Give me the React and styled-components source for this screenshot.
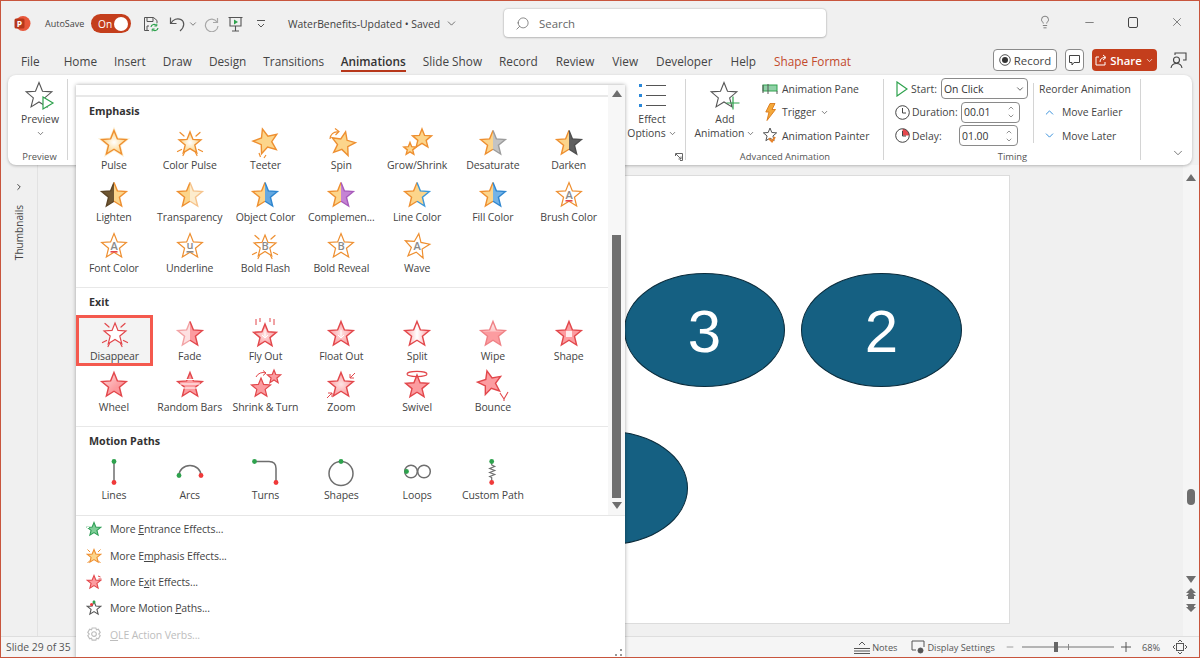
import React from 'react';
import styled, { createGlobalStyle } from 'styled-components';
import { Search, Lightbulb, Minus, X, ChevronDown, ChevronUp, ChevronRight } from 'lucide-react';

const FONT = `"Open Sans", "Noto Sans", Arial, sans-serif`;
const Global = createGlobalStyle`
  html, body { margin: 0; padding: 0; background: #f0f0f0; }
  * { box-sizing: border-box; }
  body { font-family: ${FONT}; color: #444; overflow: hidden; }
`;

const OS = '#ee8f30', OF = '#fcd58b', RS = '#e2474b', RF = '#fc9ca0';

const starArr = (cx, cy, R, r, rot) => {
  const out = [];
  for (let i = 0; i < 10; i++) {
    const a = ((-90 + i * 36 + rot) * Math.PI) / 180;
    const d = i % 2 ? r : R;
    out.push(`${(cx + d * Math.cos(a)).toFixed(2)},${(cy + d * Math.sin(a)).toFixed(2)}`);
  }
  return out;
};

function Star({ cx = 16, cy = 17.5, R = 13, r, rot = 0, fill = OF, stroke = OS, sw = 1.4, lf, rf, ls, rs }) {
  const p = starArr(cx, cy, R, r || R * 0.44, rot);
  if (lf || rf || ls || rs) {
    const right = p.slice(0, 6);
    const left = [...p.slice(5), p[0]];
    return (
      <g strokeLinejoin="miter">
        <polygon points={left.join(' ')} fill={lf || fill} />
        <polygon points={right.join(' ')} fill={rf || fill} />
        <polyline points={left.join(' ')} fill="none" stroke={ls || stroke} strokeWidth={sw} />
        <polyline points={right.join(' ')} fill="none" stroke={rs || stroke} strokeWidth={sw} />
      </g>
    );
  }
  return <polygon points={p.join(' ')} fill={fill} stroke={stroke} strokeWidth={sw} strokeLinejoin="miter" />;
}

const Letter = ({ c, u, color = '#8a8a8a', y = 20.5 }) => (
  <>
    <text x="16" y={y} textAnchor="middle" fontSize="11" fontWeight="600" fontFamily={FONT} fill={color}>{c}</text>
    {u && <line x1="12.5" x2="19.5" y1="22.8" y2="22.8" stroke={u} strokeWidth="1.6" />}
  </>
);

const Rays = ({ color = OS, cy = 17.5 }) => (
  <g stroke={color} strokeWidth="1.2" strokeLinecap="round">
    <path d={`M6 ${cy - 11}l4 3.5M26 ${cy - 11}l-4 3.5M3.5 ${cy + 8}l4 -2M28.5 ${cy + 8}l-4 -2M9 ${cy + 12}l1.5 -3M23 ${cy + 12}l-1.5 -3`} />
  </g>
);

const MotionStroke = styled.g`
  fill: none;
  stroke: #6e6e6e;
  stroke-width: ${p => p.$sw || 1.5};
`;
const Dots = ({ g, r }) => (
  <>
    <circle cx={g[0]} cy={g[1]} r="2.4" fill="#2ea24d" />
    {r && <circle cx={r[0]} cy={r[1]} r="2.4" fill="#f03a3a" />}
  </>
);

const ICONS = {
  pulse: <><Star R={17} sw={0} fill="#fdf0d4" stroke="none" /><Star fill="url(#oGlow)" /></>,
  colorPulse: <><Rays /><Star R={11.5} fill="url(#oGlow)" /></>,
  teeter: <><Star rot={-16} cx={17} cy={15.5} /><path d="M10 27l1.5 4M15 32l2-3" stroke={OS} strokeWidth="1.2" fill="none" /></>,
  spin: <><Star rot={12} cx={18} cy={18} R={12.5} /><path d="M5 13a7 7 0 0 1 8-7M10 2.5l4 3-3.5 3.5" stroke={OS} strokeWidth="1.2" fill="none" /></>,
  grow: <><Star cx={21} cy={13} R={10} /><Star cx={9} cy={23} R={6.5} /></>,
  desaturate: <Star rf="#c4c4c4" rs="#9c9c9c" />,
  darken: <Star rf="#5f5f5f" rs="#4f4f4f" />,
  lighten: <Star lf="#6f5733" ls="#5c4526" />,
  transparency: <Star rf="#fdeccd" rs="#f6c48d" />,
  objectColor: <Star rf="#64a8e0" rs="#2f86cf" />,
  complement: <Star rf="#c583d4" rs="#a85bbb" />,
  lineColor: <Star rs="#3d97d8" />,
  fillColor: <Star rf="#74b3e6" rs="#2f86cf" />,
  brushColor: <><Star fill="#fff" sw={1.2} /><Letter c="A" u="#e5484d" /></>,
  fontColor: <><Star fill="#fff" sw={1.2} /><Letter c="A" u="#e5484d" /></>,
  underline: <><Star fill="#fff" sw={1.2} /><Letter c="u" u="#8a8a8a" y={20} /></>,
  boldFlash: <><Rays /><Star fill="#fff" R={11.5} sw={1.2} /><Letter c="B" /></>,
  boldReveal: <><Star fill="#fff" sw={1.2} /><Letter c="B" /></>,
  wave: <><Star fill="#fff" rot={8} sw={1.2} /><Letter c="A" /></>,

  disappear: <><Rays color={RS} /><Star R={11.5} fill="#fff" stroke={RS} sw={1.2} /></>,
  fade: <Star stroke={RS} lf="#fde0e1" rf="#fc9ca0" ls="#f2a3a5" />,
  flyOut: <><Star cy={19} R={12} fill="url(#rGlow)" stroke={RS} /><path d="M7 2v6M11 1v4M21 1v4M25 2v6" stroke={RS} strokeWidth="1" fill="none" /><path d="M16 12v9M13 18l3 3 3-3" stroke="#fff" strokeWidth="1" fill="none" /></>,
  floatOut: <><Star fill="url(#rGlow)" stroke={RS} /><path d="M16 13v8M13 18l3 3 3-3" stroke="#fff" strokeWidth="1" fill="none" /></>,
  split: <Star fill="url(#rSplit)" stroke={RS} />,
  wipe: <Star fill="url(#rWipe)" stroke="#ef8286" />,
  shape: <><Star fill={RF} stroke={RS} /><rect x="13" y="14" width="6" height="6" fill="#fff" opacity=".8" /></>,
  wheel: <Star fill="url(#rWheel)" stroke={RS} />,
  randomBars: <><Star fill={RF} stroke={RS} /><path d="M9 11.5h14M6 16h20M9 20h14" stroke="#fff" strokeWidth="1.1" /></>,
  shrink: <><Star cx={12} cy={20} R={10} fill={RF} stroke={RS} sw={1.2} /><Star cx={25} cy={9} R={7} fill={RF} stroke={RS} sw={1.2} /><path d="M7 9a8 8 0 0 1 10-4M14 2.5l3 2.5-3 2.5" stroke={RS} strokeWidth="1" fill="none" /></>,
  zoom: <><Star fill="url(#rGlow)" stroke={RS} /><path d="M30 5l-5 5M25 6v4h4M2 30l5-5M7 29v-4H3" stroke={RS} strokeWidth="1" fill="none" /></>,
  swivel: <><Star cy={19} R={12} fill={RF} stroke={RS} /><ellipse cx="16" cy="6" rx="10" ry="2.6" fill="none" stroke={RS} strokeWidth="1.1" /></>,
  bounce: <><Star rot={-14} cx={13} cy={15} R={12.5} fill={RF} stroke={RS} /><path d="M23 25l4 6 4-7M27 31v2" stroke={RS} strokeWidth="1.1" fill="none" /></>,

  lines: <><MotionStroke><path d="M16 5.5v21" /></MotionStroke><Dots g={[16, 5.5]} r={[16, 26.5]} /></>,
  arcs: <><MotionStroke><path d="M5 19.5A11 10 0 0 1 27 19.5" /></MotionStroke><Dots g={[5, 19.5]} r={[27, 19.5]} /></>,
  turns: <><MotionStroke><path d="M5.5 5.5H20Q27 5.5 27 12.5V26.5" /></MotionStroke><Dots g={[5.5, 5.5]} r={[27, 26.5]} /></>,
  shapes: <><MotionStroke><circle cx="16" cy="17.5" r="12" /></MotionStroke><Dots g={[16, 5.5]} /></>,
  loops: <><MotionStroke><circle cx="10" cy="15.5" r="6.3" /><circle cx="23" cy="15.5" r="6.3" /></MotionStroke><Dots g={[5.5, 15.5]} /></>,
  custom: <><MotionStroke $sw={1.2}><path d="M14.7 6v3l3 1.5-5 2 5 2-5 2 5 2-5 2 2 1v4" /></MotionStroke><Dots g={[14.7, 5.5]} r={[14.7, 26.5]} /></>,
};

const EMPHASIS = [
  ['Pulse', 'pulse'], ['Color Pulse', 'colorPulse'], ['Teeter', 'teeter'], ['Spin', 'spin'], ['Grow/Shrink', 'grow'], ['Desaturate', 'desaturate'], ['Darken', 'darken'],
  ['Lighten', 'lighten'], ['Transparency', 'transparency'], ['Object Color', 'objectColor'], ['Complemen...', 'complement'], ['Line Color', 'lineColor'], ['Fill Color', 'fillColor'], ['Brush Color', 'brushColor'],
  ['Font Color', 'fontColor'], ['Underline', 'underline'], ['Bold Flash', 'boldFlash'], ['Bold Reveal', 'boldReveal'], ['Wave', 'wave'],
];
const EXIT = [
  ['Disappear', 'disappear', true], ['Fade', 'fade'], ['Fly Out', 'flyOut'], ['Float Out', 'floatOut'], ['Split', 'split'], ['Wipe', 'wipe'], ['Shape', 'shape'],
  ['Wheel', 'wheel'], ['Random Bars', 'randomBars'], ['Shrink & Turn', 'shrink'], ['Zoom', 'zoom'], ['Swivel', 'swivel'], ['Bounce', 'bounce'],
];
const MOTION = [['Lines', 'lines'], ['Arcs', 'arcs'], ['Turns', 'turns'], ['Shapes', 'shapes'], ['Loops', 'loops'], ['Custom Path', 'custom']];
const TABS = [
  ['Home', 24], ['Insert', 17], ['Draw', 17], ['Design', 17], ['Transitions', 17], ['Animations', 16.5], ['Slide Show', 17],
  ['Record', 17], ['Review', 18], ['View', 18], ['Developer', 18], ['Help', 18], ['Shape Format', 18],
];

/* frame */
const Frame = styled.div`
  position: relative;
  width: 1200px;
  height: 658px;
  border: 1px solid #c8553d;
  background: #f0f0f0;
  display: flex;
  flex-direction: column;
  overflow: hidden;
`;
const Hidden = styled.svg`
  position: absolute;
  width: 0;
  height: 0;
`;

/* title bar */
const TitleBar = styled.div`
  height: 45px;
  flex: none;
  display: flex;
  align-items: center;
  padding-left: 13px;
  color: #444;
`;
const Slot = styled.div`
  display: flex;
  align-items: center;
  flex: none;
  color: #555;
  margin-left: ${p => p.$ml || 0}px;
`;
const AutoSave = styled.span`
  font-size: 9px;
  margin-left: 14px;
  width: 46px;
  white-space: nowrap;
`;
const Toggle = styled.div`
  width: 40px;
  height: 19px;
  border-radius: 10px;
  background: #c43e1c;
  color: #fff;
  font-size: 10.2px;
  display: flex;
  align-items: center;
  justify-content: space-between;
  padding: 0 3px 0 7px;
  &::after {
    content: '';
    width: 14px;
    height: 14px;
    border-radius: 50%;
    background: #fff;
  }
`;
const DocName = styled.div`
  width: 172px;
  margin-left: 22px;
  font-size: 10.4px;
  display: flex;
  align-items: center;
  gap: 5px;
  white-space: nowrap;
  color: #3f3f3f;
`;
const SearchBox = styled.div`
  width: 322px;
  height: 28px;
  margin-left: 44px;
  margin-top: -1px;
  background: #fff;
  border-radius: 4px;
  box-shadow: 0 0 2px rgba(0, 0, 0, .3), 0 1px 2px rgba(0, 0, 0, .15);
  display: flex;
  align-items: center;
  gap: 9px;
  padding-left: 11px;
  font-size: 11.4px;
  color: #666;
`;
const MirroredSearch = styled(Search)`
  transform: scaleX(-1);
`;
const WinControls = styled.div`
  margin-left: auto;
  display: flex;
  margin-top: -3px;
`;
const WinBtn = styled.div`
  width: 44px;
  height: 30px;
  display: flex;
  align-items: center;
  justify-content: center;
  color: #444;
`;

/* tabs */
const TabRow = styled.div`
  height: 28px;
  flex: none;
  display: flex;
  align-items: flex-start;
  padding: 0 11px 0 20px;
`;
const Tab = styled.div`
  height: 26px;
  padding-top: 6px;
  line-height: 18px;
  font-size: 11.8px;
  white-space: nowrap;
  color: ${p => (p.$shape ? '#c34a2c' : p.$active ? '#333' : '#444')};
  font-weight: ${p => (p.$active ? 600 : 400)};
  margin-left: ${p => p.$ml}px;
  border-bottom: 2px solid ${p => (p.$active ? '#b7371a' : 'transparent')};
`;
const RightBtns = styled.div`
  margin-left: auto;
  display: flex;
  align-items: center;
  margin-top: 3px;
`;
const RecordBtn = styled.div`
  width: 64px;
  height: 22px;
  background: #fff;
  border: 1px solid #8a8a8a;
  border-radius: 4px;
  display: flex;
  align-items: center;
  justify-content: center;
  gap: 3px;
  font-size: 11.4px;
  color: #444;
`;
const CommentBtn = styled.div`
  width: 19px;
  height: 22px;
  margin-left: 8px;
  background: #fff;
  border: 1px solid #8a8a8a;
  border-radius: 4px;
  display: flex;
  align-items: center;
  justify-content: center;
`;
const ShareBtn = styled.div`
  width: 65px;
  height: 22px;
  margin-left: 8px;
  background: #c43e1c;
  color: #fff;
  border-radius: 4px;
  display: flex;
  align-items: center;
  justify-content: center;
  gap: 3px;
  font-size: 11.4px;
  font-weight: 600;
`;
const PersonBtn = styled.div`
  width: 20px;
  margin-left: 11px;
  display: flex;
  justify-content: center;
`;

/* ribbon */
const Ribbon = styled.div`
  height: 90px;
  margin: 1px 7px 0;
  flex: none;
  background: #fff;
  border-radius: 8px;
  box-shadow: 0 1px 3px rgba(0, 0, 0, .25);
  display: flex;
  position: relative;
  z-index: 2;
`;
const Group = styled.div`
  width: ${p => p.$w}px;
  flex: ${p => (p.$grow ? 1 : 'none')};
  display: flex;
  flex-direction: column;
  position: relative;
  &::after {
    content: '';
    display: ${p => (p.$nosep ? 'none' : 'block')};
    position: absolute;
    right: 0;
    top: 4px;
    bottom: 5px;
    width: 1px;
    background: #d4d4d4;
  }
`;
const GroupBody = styled.div`
  flex: 1;
  display: flex;
  padding-top: 2px;
  justify-content: ${p => p.$justify || 'flex-start'};
`;
const GroupLabel = styled.div`
  height: 16px;
  line-height: 16px;
  font-size: 9.4px;
  text-align: center;
  color: #555;
  position: relative;
  white-space: nowrap;
  padding-left: ${p => p.$pl || 0}px;
`;
const Launcher = styled.svg`
  position: absolute;
  right: 3px;
  bottom: 4px;
`;
const BigBtn = styled.div`
  width: ${p => p.$w}px;
  flex: none;
  display: flex;
  flex-direction: column;
  align-items: center;
  font-size: 10.4px;
  line-height: 14px;
  color: #444;
  white-space: nowrap;
  margin: ${p => p.$m || 0};
`;
const BigIcon = styled.div`
  height: 30px;
  margin-top: 3.5px;
  display: flex;
  align-items: center;
  margin-bottom: 1.5px;
`;
const BigStar = styled.svg`
  width: 30px;
  height: 28px;
  overflow: visible;
`;
const BigLine = styled.div`
  display: flex;
  align-items: center;
  gap: 2px;
  height: 14px;
`;
const SmallCol = styled.div`
  display: flex;
  flex-direction: column;
  margin-left: ${p => p.$ml || 0}px;
`;
const SmallRow = styled.div`
  height: 23.5px;
  display: flex;
  align-items: center;
  font-size: 10.4px;
  color: #444;
  white-space: nowrap;
  gap: ${p => p.$gap ?? 4}px;
  padding-left: ${p => p.$pl || 0}px;
`;
const IconBox = styled.span`
  width: ${p => p.$w}px;
  flex: none;
  display: flex;
  justify-content: center;
`;
const FieldLabel = styled.span`
  width: ${p => p.$w}px;
  flex: none;
`;
const Field = styled.div`
  width: ${p => p.$w}px;
  height: 21px;
  flex: none;
  border: 1px solid #8a8a8a;
  border-radius: 4px;
  background: #fff;
  font-size: 10.4px;
  display: flex;
  align-items: center;
  justify-content: space-between;
  padding: 0 2px 0 2px;
  color: #333;
`;
const Spin = styled.span`
  display: flex;
  flex-direction: column;
  align-items: center;
  margin-right: 2px;
  line-height: 0;
`;
const TimingBody = styled.div`
  flex: 1;
  display: flex;
  padding-top: 2px;
`;
const TimingCol = styled.div`
  width: 150px;
  padding-left: 11px;
  position: relative;
  &::after {
    content: '';
    position: absolute;
    right: 0;
    top: 6px;
    bottom: 6px;
    width: 1px;
    background: #d4d4d4;
  }
`;
const CornerChevron = styled.div`
  margin-top: auto;
  margin-left: auto;
  margin-right: 7px;
  margin-bottom: 5px;
  color: #444;
  display: flex;
`;

/* workspace */
const Workspace = styled.div`
  flex: 1;
  display: flex;
  min-height: 0;
`;
const ThumbPanel = styled.div`
  width: 37px;
  flex: none;
  border-right: 1.5px solid #e2e2e2;
  display: flex;
  flex-direction: column;
  align-items: center;
  padding-top: 17px;
  color: #444;
`;
const ThumbLabel = styled.div`
  writing-mode: vertical-rl;
  transform: rotate(180deg);
  font-size: 10.1px;
  margin-top: 13px;
  color: #444;
`;
const Stage = styled.div`
  flex: 1;
  padding: 11px 0 0 176px;
`;
const Slide = styled.div`
  position: relative;
  width: 795px;
  height: 447px;
  background: #fff;
  box-shadow: 0 0 0 1px #dcdcdc;
`;
const Oval = styled.div`
  position: absolute;
  left: ${p => p.$x}px;
  top: ${p => p.$y}px;
  width: 161px;
  height: 114px;
  padding-top: 2px;
  border-radius: 50%;
  background: #156082;
  border: 1px solid #0b2c3c;
  color: #fff;
  font-family: "Liberation Sans", Arial, sans-serif;
  font-size: 60px;
  display: flex;
  align-items: center;
  justify-content: center;
`;
const VRail = styled.div`
  width: 16px;
  flex: none;
  background: #f5f5f5;
  display: flex;
  flex-direction: column;
  align-items: center;
  padding-top: 9px;
`;
const VThumb = styled.div`
  width: 8px;
  height: 16px;
  border-radius: 4px;
  background: #6e6e6e;
  margin-top: 308px;
`;
const NavStack = styled.div`
  margin-top: 71px;
  display: flex;
  flex-direction: column;
  align-items: center;
  gap: 5px;
`;

/* status */
const StatusBar = styled.div`
  height: 21px;
  flex: none;
  background: #f5f5f5;
  border-top: 1px solid #dedede;
  display: flex;
  align-items: center;
  font-size: 9.2px;
  color: #555;
  padding-left: 5px;
`;
const SlideCount = styled.span`
  font-size: 10.4px;
`;
const StatusRight = styled.div`
  margin-left: auto;
  display: flex;
  align-items: center;
  margin-right: 12px;
`;
const StatusItem = styled.div`
  display: flex;
  align-items: center;
  gap: 2px;
  margin-left: ${p => p.$ml || 0}px;
`;
const Zoomer = styled.div`
  width: 92px;
  height: 2px;
  margin: 0 5px;
  background: #b4b4b4;
  position: relative;
  &::before {
    content: '';
    position: absolute;
    left: 32px;
    top: -4px;
    width: 4px;
    height: 10px;
    background: #666;
  }
  &::after {
    content: '';
    position: absolute;
    left: 46px;
    top: -2px;
    width: 1px;
    height: 6px;
    background: #888;
  }
`;

/* gallery */
const Gallery = styled.div`
  position: absolute;
  left: 75px;
  top: 84px;
  width: 549px;
  height: 574px;
  background: #fff;
  box-shadow: 0 0 4px rgba(0, 0, 0, .35);
  z-index: 5;
  display: flex;
  flex-direction: column;
`;
const GalleryTop = styled.div`
  display: flex;
  height: 431px;
  flex: none;
  border-bottom: 1.5px solid #e6e6e6;
`;
const Sections = styled.div`
  width: 532px;
  flex: none;
  padding-top: 10px;
`;
const Section = styled.section`
  border-top: 2px solid #e8e8e8;
  padding-bottom: 8.2px;
  & + & { border-top-width: 1.5px; }
`;
const SectionTitle = styled.h3`
  margin: 0;
  height: 27px;
  line-height: 29px;
  padding-left: 13px;
  font-size: 10.7px;
  font-weight: 700;
  color: #333;
`;
const Cells = styled.div`
  display: grid;
  grid-template-columns: repeat(7, 75.8px);
  grid-auto-rows: 51.5px;
`;
const Cell = styled.div`
  display: flex;
  flex-direction: column;
  align-items: center;
  padding-top: 2px;
  white-space: nowrap;
  font-size: 10.5px;
  letter-spacing: -0.1px;
  line-height: 14px;
  color: #444;
  ${p => p.$sel && `
    background: #f3f3f3;
    outline: 3px solid #f4594e;
    outline-offset: -3px;
    width: 77px;
  `}
`;
const CellIcon = styled.svg`
  width: 32px;
  height: 32px;
  flex: none;
  overflow: visible;
`;
const Rail = styled.div`
  width: 17px;
  flex: none;
  background: #f7f7f7;
  display: flex;
  flex-direction: column;
  align-items: center;
  padding-top: 5px;
`;
const RailThumb = styled.div`
  width: 9px;
  height: 263px;
  background: #707070;
  margin-top: 138px;
  margin-bottom: 4px;
`;
const Menu = styled.div`
  display: flex;
  flex-direction: column;
`;
const MenuItem = styled.div`
  height: 26.4px;
  display: flex;
  align-items: center;
  padding-left: 10px;
  gap: 8px;
  font-size: 10.5px;
  letter-spacing: -0.1px;
  color: ${p => (p.$off ? '#bdbdbd' : '#444')};
  white-space: nowrap;
`;
const MenuIcon = styled.svg`
  width: 16px;
  height: 16px;
  flex: none;
`;
const Grip = styled.svg`
  position: absolute;
  right: 2px;
  bottom: 2px;
`;

const Tri = ({ up = true, c = '#6e6e6e', w = 10, h = 7 }) => (
  <svg width={w} height={h} viewBox="0 0 9 6" preserveAspectRatio="none"><polygon points={up ? '4.5,0 9,6 0,6' : '0,0 9,0 4.5,6'} fill={c} /></svg>
);
const Dbl = ({ up }) => (
  <svg width="10" height="11" viewBox="0 0 10 11">
    {up
      ? <g fill="#6e6e6e"><polygon points="5,0 10,5 0,5" /><polygon points="5,3 10,8 8,8 8,11 2,11 2,8 0,8" /></g>
      : <g fill="#6e6e6e"><polygon points="0,11 10,11 5,6" transform="rotate(180 5 5.5)" /><polygon points="5,8 10,3 8,3 8,0 2,0 2,3 0,3" /></g>}
  </svg>
);
const SmallChev = ({ size = 9 }) => <ChevronDown size={size} strokeWidth={1.8} />;

const MiniStar = ({ fill, stroke, children }) => (
  <MenuIcon viewBox="0 0 32 32">
    <Star cy={17} R={14} fill={fill} stroke={stroke} sw={2.2} />
    {children}
  </MenuIcon>
);

function App() {
  return (
    <Frame>
      <Global />
      <Hidden>
        <defs>
          <radialGradient id="oGlow"><stop offset="0" stopColor="#fff" /><stop offset=".55" stopColor="#fde6b8" /><stop offset="1" stopColor={OF} /></radialGradient>
          <radialGradient id="rGlow"><stop offset="0" stopColor="#fde3e3" /><stop offset="1" stopColor={RF} /></radialGradient>
          <linearGradient id="rSplit"><stop offset="0" stopColor={RF} /><stop offset=".5" stopColor="#fff" /><stop offset="1" stopColor={RF} /></linearGradient>
          <linearGradient id="rWipe" x1="0" y1="0" x2="0" y2="1"><stop offset="0" stopColor="#fee" /><stop offset=".4" stopColor="#fdc9ca" /><stop offset=".45" stopColor={RF} /><stop offset="1" stopColor={RF} /></linearGradient>
          <linearGradient id="rWheel" x1="0" y1="0" x2="1" y2="1"><stop offset="0" stopColor="#fde0e0" /><stop offset=".6" stopColor={RF} /><stop offset="1" stopColor="#fb8d92" /></linearGradient>
        </defs>
      </Hidden>

      <TitleBar>
        <Slot>
          <svg width="17" height="17" viewBox="0 0 17 17">
            <circle cx="9" cy="8.5" r="7.5" fill="#e8573a" />
            <rect x="0.5" y="3.5" width="10" height="10" rx="1.5" fill="#b7371a" />
            <text x="5.5" y="12" textAnchor="middle" fontSize="8.5" fontWeight="700" fontFamily={FONT} fill="#fff">P</text>
          </svg>
        </Slot>
        <AutoSave>AutoSave</AutoSave>
        <Toggle>On</Toggle>
        <Slot $ml={12}>
          <svg width="16" height="16" viewBox="0 0 16 16" fill="none" stroke="#555" strokeWidth="1">
            <path d="M6 14.5H1.5v-13h9l3.5 3V7" /><path d="M4 1.5v4h6v-4M4 14v-4h2" />
            <path d="M8 11a3 3 0 0 1 5.5-1.2M15 12a3 3 0 0 1-5.5 1.2" stroke="#2ea24d" strokeWidth="1.2" />
            <path d="M13.8 7.6v2.4h-2.4M9.2 15.4V13h2.4" stroke="#2ea24d" strokeWidth="1" />
          </svg>
        </Slot>
        <Slot $ml={10}>
          <svg width="18" height="16" viewBox="0 0 18 16" fill="none" stroke="#555" strokeWidth="1.2">
            <path d="M1.5 1.5v6h6" /><path d="M1.8 7.5C4 3.2 8.5 1.8 12 3.6c3.6 2 4 7.2-1 11.4" />
          </svg>
        </Slot>
        <Slot $ml={1}><SmallChev size={10} /></Slot>
        <Slot $ml={5}>
          <svg width="16" height="16" viewBox="0 0 16 16" fill="none" stroke="#a8a8a8" strokeWidth="1.2">
            <path d="M14.5 2v4.5H10" /><path d="M14 6a6.3 6.3 0 1 0 1 4" />
          </svg>
        </Slot>
        <Slot $ml={9}>
          <svg width="15" height="16" viewBox="0 0 15 16" fill="none" stroke="#555" strokeWidth="1.1">
            <path d="M0.5 1.5h14M2 1.5v8.5h11v-8.5M7.5 10v5M4 15h7" /><polygon points="6,3.5 10,6 6,8.5" fill="#2ea24d" stroke="none" />
          </svg>
        </Slot>
        <Slot $ml={13}>
          <svg width="10" height="10" viewBox="0 0 10 10" fill="none" stroke="#555" strokeWidth="1"><path d="M1 1.5h8M2 5l3 3 3-3" /></svg>
        </Slot>
        <DocName>WaterBenefits-Updated&nbsp;•&nbsp;Saved <ChevronDown size={13} strokeWidth={1.3} /></DocName>
        <SearchBox><MirroredSearch size={15} strokeWidth={1.2} />Search</SearchBox>
        <WinControls>
          <WinBtn><Lightbulb size={14} strokeWidth={1.1} /></WinBtn>
          <WinBtn><Minus size={13} strokeWidth={1.2} /></WinBtn>
          <WinBtn>
            <svg width="10" height="11" viewBox="0 0 10 11" fill="none" stroke="#444"><rect x=".5" y=".5" width="9" height="10" rx="1.5" /></svg>
          </WinBtn>
          <WinBtn><X size={14} strokeWidth={1.1} /></WinBtn>
        </WinControls>
      </TitleBar>

      <TabRow>
        <Tab $ml={0}>File</Tab>
        {TABS.map(([t, ml]) => (
          <Tab key={t} $ml={ml} $active={t === 'Animations'} $shape={t === 'Shape Format'}>{t}</Tab>
        ))}
        <RightBtns>
          <RecordBtn>
            <svg width="12" height="12" viewBox="0 0 12 12"><circle cx="6" cy="6" r="5.3" fill="none" stroke="#555" /><circle cx="6" cy="6" r="3" fill="#333" /></svg>
            Record
          </RecordBtn>
          <CommentBtn>
            <svg width="11" height="11" viewBox="0 0 11 11" fill="none" stroke="#444"><path d="M.5.5h10v7H5L3 10V7.5H.5z" /></svg>
          </CommentBtn>
          <ShareBtn>
            <svg width="12" height="12" viewBox="0 0 12 12" fill="none" stroke="#fff"><path d="M4 3H1v8h9V8M5 8c0-3 2-4.5 5-4.5M8 1l3 2.5L8 6" /></svg>
            Share <SmallChev />
          </ShareBtn>
          <PersonBtn>
            <svg width="17" height="17" viewBox="0 0 17 17" fill="none" stroke="#444" strokeWidth="1.1">
              <circle cx="6.5" cy="8" r="3" /><path d="M1 16c.5-3 2.5-4.5 5.5-4.5S11.500 13 12 16M5 3V1h11v7h-3" />
            </svg>
          </PersonBtn>
        </RightBtns>
      </TabRow>

      <Ribbon>
        <Group $w={60}>
          <GroupBody>
            <BigBtn $w={60} $m="0 0 0 2px">
              <BigIcon>
                <BigStar viewBox="0 0 30 28">
                  <Star cx={14} cy={14} R={13.5} fill="#fff" stroke="#555" sw={1.1} />
                  <polygon points="18,15 28,21 18,27" fill="#fff" stroke="#2ea24d" strokeWidth="1.2" />
                </BigStar>
              </BigIcon>
              <BigLine>Preview</BigLine>
              <BigLine><SmallChev /></BigLine>
            </BigBtn>
          </GroupBody>
          <GroupLabel $pl={3}>Preview</GroupLabel>
        </Group>

        <Group $w={618}>
          <GroupBody $justify="flex-end">
            <BigBtn $w={60} $m="0 4px 0 0">
              <BigIcon>
                <svg width="27" height="24" viewBox="0 0 27 24">
                  <g fill="#2b88d8"><rect x="0" y="0" width="3" height="3" /><rect x="0" y="10" width="3" height="3" /><rect x="0" y="20" width="3" height="3" /></g>
                  <path d="M7 1.500h20M7 11.500h20M7 21.500h20" stroke="#555" strokeWidth="1.2" />
                </svg>
              </BigIcon>
              <BigLine>Effect</BigLine>
              <BigLine>Options <SmallChev /></BigLine>
            </BigBtn>
          </GroupBody>
          <GroupLabel>&nbsp;
            <Launcher width="8" height="8" viewBox="0 0 8 8" fill="none" stroke="#666"><path d="M.5 3V.5H7.500V7.500H5M1 1l5 5M3.500 6H6V3.500" /></Launcher>
          </GroupLabel>
        </Group>

        <Group $w={198}>
          <GroupBody>
            <BigBtn $w={74} $m="0 0 0 2px">
              <BigIcon>
                <BigStar viewBox="0 0 30 28">
                  <Star cx={14} cy={14} R={13.5} fill="#fff" stroke="#555" sw={1.1} />
                  <path d="M23 14.500v13M16.500 21h13" stroke="#2ea24d" strokeWidth="1.2" />
                </BigStar>
              </BigIcon>
              <BigLine>Add</BigLine>
              <BigLine>Animation <SmallChev /></BigLine>
            </BigBtn>
            <SmallCol>
              <SmallRow>
                <IconBox $w={16}>
                  <svg width="16" height="12" viewBox="0 0 16 12" fill="none"><rect x="1" y="2" width="14" height="6" fill="#8fd0a6" stroke="#2ea24d" /><path d="M6 1v10M1 2v8M15 8v3" stroke="#555" /></svg>
                </IconBox>
                Animation Pane
              </SmallRow>
              <SmallRow>
                <IconBox $w={16}>
                  <svg width="11" height="18" viewBox="0 0 11 18"><path d="M5 .5h5L7 6.500h3.500L2 17.500 4 9H.8z" fill="#f4a83a" stroke="#d9781a" strokeWidth=".9" /></svg>
                </IconBox>
                Trigger <SmallChev />
              </SmallRow>
              <SmallRow>
                <IconBox $w={16}>
                  <svg width="16" height="17" viewBox="0 0 32 32"><Star cy={15} R={14} fill="#fff" stroke="#555" sw={2} /><path d="M14 22l6 6 6-9" stroke="#e8842c" strokeWidth="4" fill="none" /></svg>
                </IconBox>
                Animation Painter
              </SmallRow>
            </SmallCol>
          </GroupBody>
          <GroupLabel>Advanced Animation</GroupLabel>
        </Group>

        <Group $w={257}>
          <TimingBody>
            <TimingCol>
              <SmallRow $gap={2}>
                <IconBox $w={14}>
                  <svg width="12" height="16" viewBox="0 0 12 16"><polygon points="1,1 11,8 1,15" fill="#fff" stroke="#2ea24d" strokeWidth="1.2" /></svg>
                </IconBox>
                <FieldLabel $w={28}>Start:</FieldLabel>
                <Field $w={87}>On Click <SmallChev size={10} /></Field>
              </SmallRow>
              <SmallRow $gap={2}>
                <IconBox $w={15}>
                  <svg width="15" height="15" viewBox="0 0 15 15" fill="none" stroke="#444"><circle cx="7.500" cy="7.500" r="6.800" /><path d="M7.500 3v5h3.500" /></svg>
                </IconBox>
                <FieldLabel $w={47}>Duration:</FieldLabel>
                <Field $w={59}>00.01<Spin><ChevronUp size={8} strokeWidth={1.6} /><ChevronDown size={8} strokeWidth={1.6} /></Spin></Field>
              </SmallRow>
              <SmallRow $gap={2}>
                <IconBox $w={15}>
                  <svg width="15" height="15" viewBox="0 0 15 15" fill="none" stroke="#444"><path d="M7.500 7.500V.7A6.800 6.800 0 0 1 14.300 7.500z" fill="#e5484d" stroke="none" /><circle cx="7.500" cy="7.500" r="6.800" /><path d="M7.500 3v5h3.500" /></svg>
                </IconBox>
                <FieldLabel $w={45}>Delay:</FieldLabel>
                <Field $w={59}>01.00<Spin><ChevronUp size={8} strokeWidth={1.6} /><ChevronDown size={8} strokeWidth={1.6} /></Spin></Field>
              </SmallRow>
            </TimingCol>
            <SmallCol $ml={5}>
              <SmallRow>Reorder Animation</SmallRow>
              <SmallRow $pl={4} $gap={6}><ChevronUp size={13} strokeWidth={1.7} color="#2b88d8" />Move Earlier</SmallRow>
              <SmallRow $pl={4} $gap={6}><ChevronDown size={13} strokeWidth={1.7} color="#2b88d8" />Move Later</SmallRow>
            </SmallCol>
          </TimingBody>
          <GroupLabel>Timing</GroupLabel>
        </Group>

        <Group $grow $nosep>
          <CornerChevron><ChevronDown size={14} strokeWidth={1.2} /></CornerChevron>
        </Group>
      </Ribbon>

      <Workspace>
        <ThumbPanel>
          <ChevronRight size={10} strokeWidth={2.4} />
          <ThumbLabel>Thumbnails</ThumbLabel>
        </ThumbPanel>
        <Stage>
          <Slide>
            <Oval $x={410} $y={97}>3</Oval>
            <Oval $x={587} $y={97}>2</Oval>
            <Oval $x={313} $y={255} />
          </Slide>
        </Stage>
        <VRail>
          <Tri />
          <VThumb />
          <NavStack>
            <Tri up={false} />
            <Dbl up />
            <Dbl />
          </NavStack>
        </VRail>
      </Workspace>

      <StatusBar>
        <SlideCount>Slide 29 of 35</SlideCount>
        <StatusRight>
          <StatusItem>
            <svg width="16" height="14" viewBox="0 0 16 14" fill="none" stroke="#555"><path d="M0 8.500h16M0 11h16M0 13.500h16M5 5l3-3 3 3" /></svg>
            Notes
          </StatusItem>
          <StatusItem $ml={14}>
            <svg width="14" height="14" viewBox="0 0 14 14" fill="none" stroke="#555"><path d="M5 10H1V1h12v6" /><circle cx="9.500" cy="10.500" r="2.500" fill="#555" /></svg>
            Display Settings
          </StatusItem>
          <StatusItem $ml={10}>
            <Minus size={10} strokeWidth={1.3} />
            <Zoomer />
            <svg width="10" height="10" viewBox="0 0 10 10" stroke="#555"><path d="M5 0v10M0 5h10" /></svg>
          </StatusItem>
          <StatusItem $ml={11}>68%</StatusItem>
          <StatusItem $ml={13}>
            <svg width="14" height="14" viewBox="0 0 14 14" fill="none" stroke="#555"><rect x="3.500" y="3.500" width="7" height="7" /><path d="M5 2l2-2 2 2M5 12l2 2 2-2M2 5L0 7l2 2M12 5l2 2-2 2" /></svg>
          </StatusItem>
        </StatusRight>
      </StatusBar>

      <Gallery>
        <GalleryTop>
          <Sections>
            <Section>
              <SectionTitle>Emphasis</SectionTitle>
              <Cells>{EMPHASIS.map(([n, k]) => <Cell key={n}><CellIcon viewBox="0 0 32 32">{ICONS[k]}</CellIcon>{n}</Cell>)}</Cells>
            </Section>
            <Section>
              <SectionTitle>Exit</SectionTitle>
              <Cells>{EXIT.map(([n, k, s]) => <Cell key={n} $sel={s}><CellIcon viewBox="0 0 32 32">{ICONS[k]}</CellIcon>{n}</Cell>)}</Cells>
            </Section>
            <Section>
              <SectionTitle>Motion Paths</SectionTitle>
              <Cells>{MOTION.map(([n, k]) => <Cell key={n}><CellIcon viewBox="0 0 32 32">{ICONS[k]}</CellIcon>{n}</Cell>)}</Cells>
            </Section>
          </Sections>
          <Rail>
            <Tri />
            <RailThumb />
            <Tri up={false} />
          </Rail>
        </GalleryTop>
        <Menu>
          <MenuItem>
            <MiniStar fill="#7fce97" stroke="#2e9e55"><path d="M1 8h6M2 13h4M2 19h4" stroke="#fff" strokeWidth="2" /></MiniStar>
            <span>More <u>E</u>ntrance Effects...</span>
          </MenuItem>
          <MenuItem>
            <MiniStar fill={OF} stroke={OS}><path d="M3 3l5 5M29 3l-5 5M3 30l5-5M29 30l-5-5" stroke={OS} strokeWidth="2" /></MiniStar>
            <span>More E<u>m</u>phasis Effects...</span>
          </MenuItem>
          <MenuItem>
            <MiniStar fill={RF} stroke={RS}><path d="M24 4l5 2M25 10h6" stroke={RS} strokeWidth="2" /></MiniStar>
            <span>More E<u>x</u>it Effects...</span>
          </MenuItem>
          <MenuItem>
            <MiniStar fill="#fff" stroke="#555"><circle cx="16" cy="4" r="3" fill="#2ea24d" /><circle cx="11" cy="9" r="3" fill="#f03a3a" /></MiniStar>
            <span>More Motion <u>P</u>aths...</span>
          </MenuItem>
          <MenuItem $off>
            <MenuIcon viewBox="0 0 17 17" fill="none" stroke="#bdbdbd" strokeWidth="1.2">
              <path d="M6.500 1h4l.6 2 2-.6 2 3.400-1.500 1.700 1.500 1.700-2 3.400-2-.6-.6 2h-4l-.6-2-2 .6-2-3.400 1.500-1.700-1.500-1.700 2-3.400 2 .6z" /><circle cx="8.500" cy="7.500" r="2.500" />
            </MenuIcon>
            <span><u>O</u>LE Action Verbs...</span>
          </MenuItem>
        </Menu>
        <Grip width="9" height="9" viewBox="0 0 9 9" fill="#999"><rect x="6" y="1" width="2" height="2" /><rect x="1" y="6" width="2" height="2" /><rect x="6" y="6" width="2" height="2" /></Grip>
      </Gallery>
    </Frame>
  );
}

export default App;
